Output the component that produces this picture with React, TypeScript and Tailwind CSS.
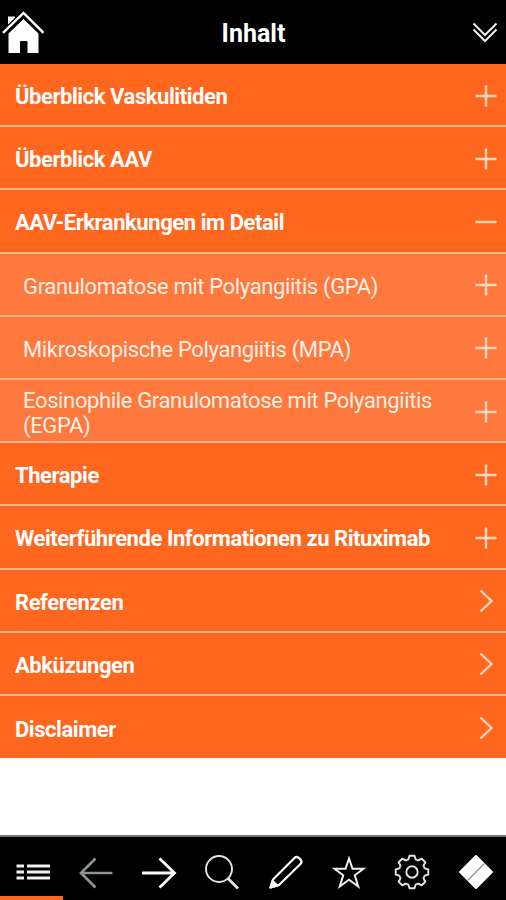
import clsx from 'clsx'

type RowIcon = 'plus' | 'minus' | 'chevron'

interface Entry {
  label: string
  icon: RowIcon
  nested?: boolean
}

const entries: Entry[] = [
  { label: 'Überblick Vaskulitiden', icon: 'plus' },
  { label: 'Überblick AAV', icon: 'plus' },
  { label: 'AAV-Erkrankungen im Detail', icon: 'minus' },
  { label: 'Granulomatose mit Polyangiitis (GPA)', icon: 'plus', nested: true },
  { label: 'Mikroskopische Polyangiitis (MPA)', icon: 'plus', nested: true },
  { label: 'Eosinophile Granulomatose mit Polyangiitis (EGPA)', icon: 'plus', nested: true },
  { label: 'Therapie', icon: 'plus' },
  { label: 'Weiterführende Informationen zu Rituximab', icon: 'plus' },
  { label: 'Referenzen', icon: 'chevron' },
  { label: 'Abküzungen', icon: 'chevron' },
  { label: 'Disclaimer', icon: 'chevron' },
]

const iconPaths: Record<RowIcon, string> = {
  plus: 'M1.5 12H22.5M12 1.5V22.5',
  minus: 'M1.5 12H22.5',
  chevron: 'M6.5 1.5L17.5 12L6.5 22.5',
}

function HomeIcon() {
  return (
    <svg width="44" height="44" viewBox="0 0 44 44" fill="#fff">
      <path d="M8 6.5H15V13L8 19.5Z" />
      <path d="M23.5 8.5L39 23.5V43.5H27V31.5H20.5V43.5H8V23.5Z" stroke="#000" strokeWidth="1" />
      <path d="M3 22.8L23.5 3L43.5 22.8" fill="none" stroke="#000" strokeWidth="5" />
      <path d="M3 22.8L23.5 3L43.5 22.8" fill="none" stroke="#fff" strokeWidth="2.4" />
    </svg>
  )
}

// One tooth of the gear, repeated every 45 degrees
const TOOTH = 'M-4.9 -11.8L-3.6 -12.8L-2.5 -16.3H2.5L3.6 -12.8L4.9 -11.8'

function GearIcon() {
  return (
    <svg width="40" height="40" viewBox="-20 -20 40 40" fill="none" stroke="#e4e4e4" strokeWidth="1.9" strokeLinejoin="round">
      {[0, 45, 90, 135, 180, 225, 270, 315].map((angle) => (
        <path key={angle} d={TOOTH} transform={`rotate(${angle})`} />
      ))}
      <circle r="5.7" />
    </svg>
  )
}

function Header() {
  return (
    <header className="flex h-16 shrink-0 items-center bg-black">
      <div className="w-16">
        <HomeIcon />
      </div>
      <h1 className="flex-1 pt-[3px] pl-[1px] text-center text-[25px] font-bold leading-8">Inhalt</h1>
      <div className="flex w-16 justify-end pt-[2px] pr-[8px]">
        <svg width="26" height="24" viewBox="0 0 26 24" fill="none" stroke="#eee" strokeWidth="2">
          <path d="M1.5 2.5L13 14L24.5 2.5M1.5 8.5L13 20L24.5 8.5" />
        </svg>
      </div>
    </header>
  )
}

function Row({ label, icon, nested }: Entry) {
  return (
    <li
      className={clsx(
        'flex h-[63.2px] items-center justify-between border-b-2 border-[#ffb689] pr-[8px] last:h-[62.5px] last:border-b-0',
        nested ? 'bg-[#ff783d] pl-[23px]' : 'bg-[#ff661e] pl-[15px]',
      )}
    >
      <span
        className={clsx(
          'pt-[4px] text-[22px] leading-[25px]',
          nested ? 'w-[425px] tracking-[-0.36px] text-[#fff0e5]' : 'font-bold tracking-[-0.44px]',
        )}
      >
        {label}
      </span>
      <svg width="24" height="24" viewBox="0 0 24 24" fill="none" stroke="#ffd5be" strokeWidth="2.4" className="mt-[2px] shrink-0">
        <path d={iconPaths[icon]} />
      </svg>
    </li>
  )
}

function Toolbar() {
  return (
    <nav className="grid h-[65px] shrink-0 grid-cols-8 border-t-2 border-[#777] bg-black">
      <div className="flex items-center justify-center border-b-4 border-[#ff661e] pt-[11px]">
        <svg width="40" height="20" viewBox="0 0 40 20" stroke="#f0f0f0" strokeWidth="2.8">
          <path d="M4.5 4H12M15 4H38M4.5 10H12M15 10H38M4.5 16H12M15 16H38" />
        </svg>
      </div>
      <div className="flex items-center justify-center pt-[10px] pb-[2px]">
        <svg width="40" height="40" viewBox="0 0 40 40" fill="none" stroke="#8c9294" strokeWidth="2.7">
          <path d="M37.5 20H6M20.5 5.5L6 20L20.5 34.5" />
        </svg>
      </div>
      <div className="flex items-center justify-center pt-[10px] pb-[2px] pl-[2px]">
        <svg width="40" height="40" viewBox="0 0 40 40" fill="none" stroke="#fff" strokeWidth="2.8">
          <path d="M3 20H35.5M20.5 5.5L35.5 20L20.5 34.5" />
        </svg>
      </div>
      <div className="flex items-center justify-center pt-[10px] pb-[2px] pl-[2px]">
        <svg width="40" height="40" viewBox="0 0 40 40" fill="none" stroke="#e4e4e4">
          <circle cx="17" cy="16" r="13" strokeWidth="1.9" />
          <path d="M26 25.5L36 35.5" strokeWidth="2.8" />
        </svg>
      </div>
      <div className="flex items-center justify-center pt-[9px] pb-[2px] pl-[2px]">
        <svg width="40" height="40" viewBox="0 0 40 40" fill="none" stroke="#fff" strokeWidth="2.2" strokeLinejoin="round">
          <path d="M4.5 35.5L7 27.5L28.5 6Q30.5 4 33 6L34.5 7.5Q36.5 10 34.5 12L13 33Z" />
          <path d="M4.5 35.5L6.5 29L11.5 33.5Z" fill="#fff" />
        </svg>
      </div>
      <div className="flex items-center justify-center pt-[9px] pb-[2px] pl-[2px]">
        <svg width="40" height="40" viewBox="0 0 40 40" fill="none" stroke="#f0f0f0" strokeWidth="2">
          <path d="M20 6.5L23.5 16.7H34.5L25.8 23.3L29.2 34.5L20 27.8L10.8 34.5L14.2 23.3L5.5 16.7H16.5Z" />
        </svg>
      </div>
      <div className="flex items-center justify-center pt-[9px] pb-[2px] pl-[2px]">
        <GearIcon />
      </div>
      <div className="flex items-center justify-center pt-[9px] pb-[2px] pl-[3px]">
        <svg width="40" height="40" viewBox="0 0 40 40">
          <path d="M20 4L36 20L20 36L4 20Z" fill="#fff" stroke="#fff" strokeWidth="2" strokeLinejoin="round" />
          <path d="M11.5 28.5L28.5 11.5" stroke="#999" strokeWidth="1.4" />
        </svg>
      </div>
    </nav>
  )
}

export default function App() {
  return (
    <div className="flex h-[900px] w-[506px] flex-col overflow-hidden bg-white font-['Roboto',sans-serif] text-white">
      <Header />
      <ul className="flex-1">
        {entries.map((entry) => (
          <Row key={entry.label} {...entry} />
        ))}
      </ul>
      <Toolbar />
    </div>
  )
}
